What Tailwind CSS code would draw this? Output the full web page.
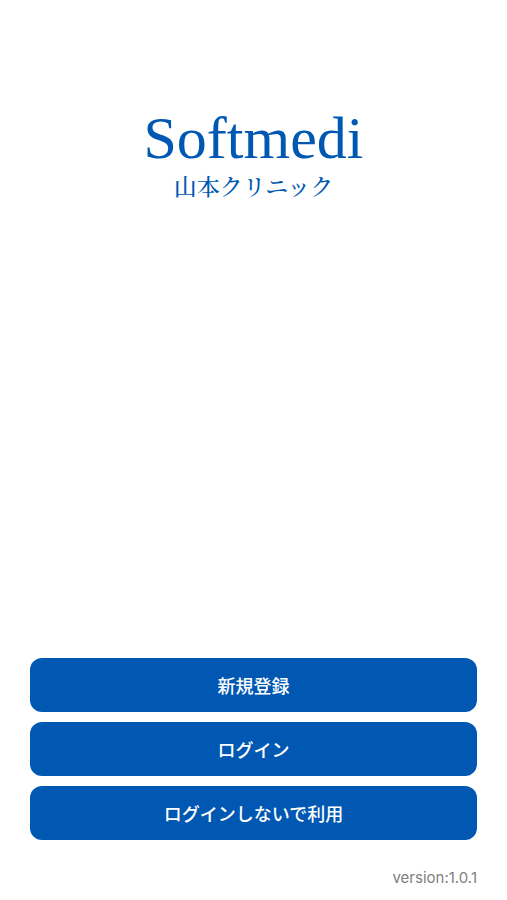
<!DOCTYPE html>
<html lang="ja">

<head>
    <meta charset="UTF-8">
    <meta name="viewport" content="width=device-width, initial-scale=1.0">
    <script src="https://cdn.jsdelivr.net/npm/@tailwindcss/browser@4"></script>
    <title>Softmedi 山本クリニック</title>
</head>

<body class="bg-white font-['Noto_Sans_CJK_JP',sans-serif]">
    <div class="flex min-h-screen flex-col px-[30px] pt-[104px] pb-3">

        <!-- ロゴ -->
        <header class="text-center text-[#0058b2] font-['Liberation_Serif','Noto_Serif_CJK_JP','Noto_Sans_CJK_JP',serif]">
            <h1 class="text-[60px] leading-[68px]">Softmedi</h1>
            <p class="mt-0.5 text-[23px] leading-7 font-medium">山本クリニック</p>
        </header>

        <!-- メニュー -->
        <main class="mt-auto flex flex-col gap-[10px]">
            <button type="button" class="h-[54px] w-full rounded-xl bg-[#0058b2] text-lg font-medium text-white">新規登録</button>
            <button type="button" class="h-[54px] w-full rounded-xl bg-[#0058b2] text-lg font-medium text-white">ログイン</button>
            <button type="button" class="h-[54px] w-full rounded-xl bg-[#0058b2] text-lg font-medium text-white">ログインしないで利用</button>
        </main>

        <footer class="mt-7 text-right text-[15px] leading-5 text-[#808080] font-[Inter,sans-serif]">version:1.0.1</footer>
    </div>
</body>

</html>
